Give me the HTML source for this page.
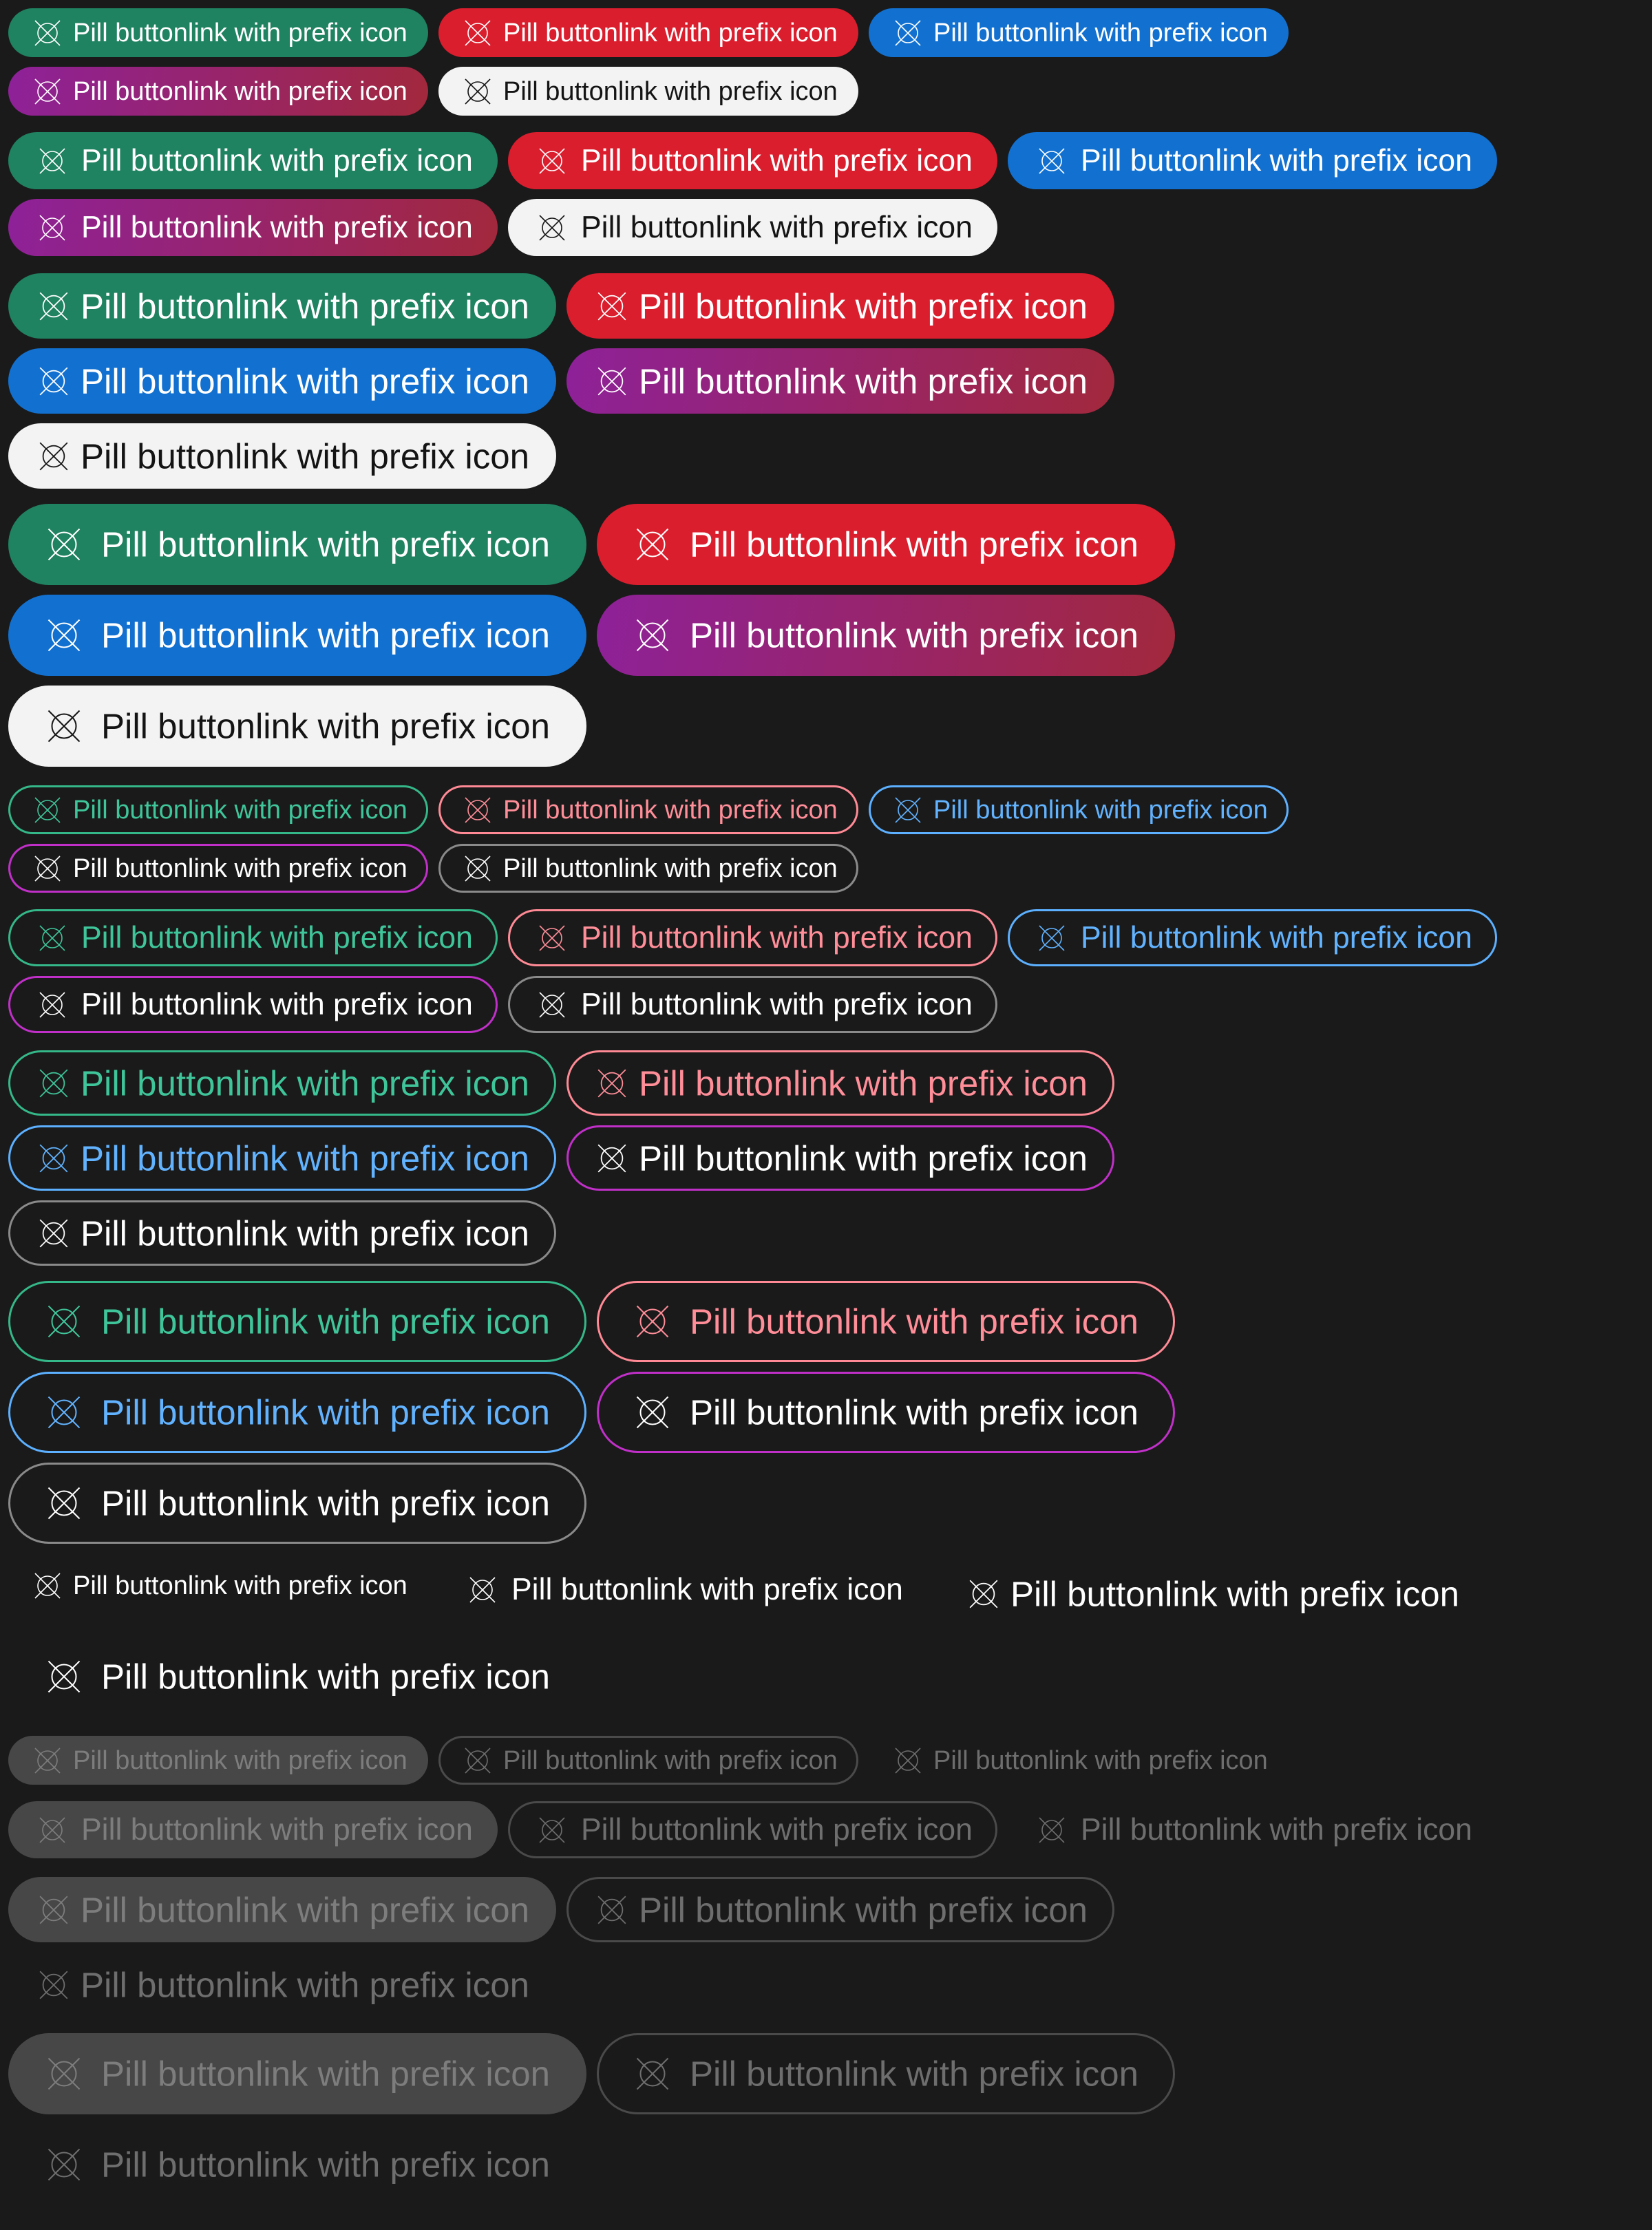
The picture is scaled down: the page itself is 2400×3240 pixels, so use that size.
<!DOCTYPE html>
<html><head><meta charset="utf-8"><style>
body{margin:0;background:#1a1a1a;width:2400px;height:3240px;overflow:hidden;font-family:"Liberation Sans",sans-serif;}
.blk{position:absolute;left:12px;width:2388px;display:flex;flex-wrap:wrap;column-gap:15px;row-gap:14px;align-items:flex-start}
.b{position:relative;box-sizing:border-box;border-radius:999px;color:#fff;white-space:nowrap;flex:none}
.b svg{position:absolute;top:50%;transform:translateY(-50%)}
.b span{position:absolute;top:50%;transform:translateY(-50%);line-height:1}
.s{width:610px;height:71px;font-size:38px}.s svg{left:37px;width:40px;height:40px}.s span{left:94px}
.m{width:711px;height:83px;font-size:44.5px}.m svg{left:44px;width:40px;height:41px}.m span{left:106px}
.l{width:796px;height:95px;font-size:51px}.l svg{left:44px;width:44px;height:46px}.l span{left:105px}
.x{width:840px;height:118px;font-size:51px}.x svg{left:56px;width:50px;height:50px}.x span{left:135px}
.g{background:#1f8260}.r{background:#da1e2e}.bl{background:#1271d0}.p{background:linear-gradient(100deg,#8e2199,#a2283c)}.w{background:#f3f3f3;color:#141414}
.og{box-shadow:inset 0 0 0 3px #35b889;color:#3fc59a}.or{box-shadow:inset 0 0 0 3px #ff8a95;color:#ff8e99}.ob{box-shadow:inset 0 0 0 3px #5cb0ff;color:#62b3ff}.op{box-shadow:inset 0 0 0 3px #c030c8}.on{box-shadow:inset 0 0 0 3px #8a8a8a}
.dg{background:#474747;color:#7d7d7d}.do{box-shadow:inset 0 0 0 3px #4a4a4a;color:#6e6e6e}.dt{color:#6e6e6e}
</style></head><body>
<svg width="0" height="0" style="position:absolute"><defs><symbol id="i" viewBox="0 0 40 40"><g fill="none" stroke="currentColor" stroke-width="1.6"><line x1="2" y1="2" x2="38" y2="38"/><line x1="38" y1="2" x2="2" y2="38"/><circle cx="20" cy="20" r="14"/></g></symbol></defs></svg>
<div id="root"></div>
<script>
const T='Pill buttonlink with prefix icon';
function btn(sz,c){return `<div class="b ${sz} ${c}"><svg><use href="#i"/></svg><span>${T}</span></div>`}
function blk(top,sz,cls){return `<div class="blk" style="top:${top}px">${cls.map(c=>btn(sz,c)).join('')}</div>`}
const F=['g','r','bl','p','w'],O=['og','or','ob','op','on'];
let h='';
h+=blk(12,'s',F)+blk(192,'m',F)+blk(397,'l',F)+blk(732,'x',F);
h+=blk(1141,'s',O)+blk(1321,'m',O)+blk(1526,'l',O)+blk(1861,'x',O);
h+=`<div class="blk" style="top:2268px">${btn('s','')}${btn('m','')}${btn('l','')}${btn('x','')}</div>`;
const D=['dg','do','dt'];
h+=blk(2522,'s',D)+blk(2617,'m',D)+blk(2727,'l',D)+blk(2954,'x',D);
document.getElementById('root').innerHTML=h;
</script>
</body></html>
